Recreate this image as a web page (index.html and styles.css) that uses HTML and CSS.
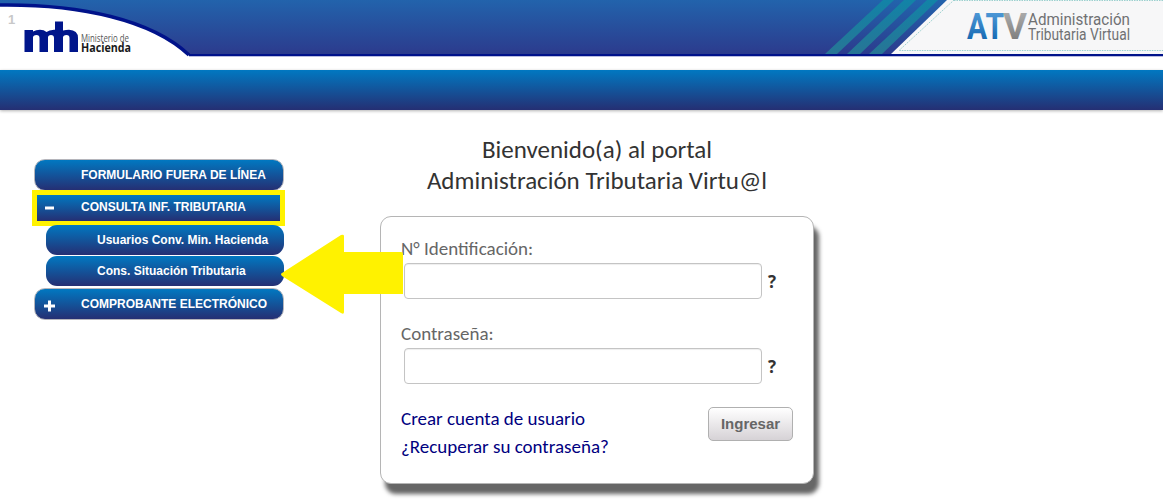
FILE: index.html
```html
<!DOCTYPE html>
<html lang="es">
<head>
  <meta charset="UTF-8">
  <title>ATV - Administración Tributaria Virtual</title>
  <link rel="stylesheet" href="styles.css">
</head>
<body>
  <header class="header">
    <svg class="banner" viewBox="0 0 1163 57" width="1163" height="57">
      <defs>
        <linearGradient id="sky" x1="0" y1="0" x2="0" y2="1">
          <stop offset="0" stop-color="#2263ac"/>
          <stop offset="1" stop-color="#2c3b8d"/>
        </linearGradient>
        <linearGradient id="stripe" x1="0" y1="0" x2="0" y2="1">
          <stop offset="0" stop-color="#1283a7"/>
          <stop offset="1" stop-color="#277595"/>
        </linearGradient>
        <linearGradient id="blue" x1="0" y1="0" x2="0" y2="1">
          <stop offset="0.2" stop-color="#4a95d4"/>
          <stop offset="0.9" stop-color="#0d62ad"/>
        </linearGradient>
        <linearGradient id="gray" x1="0" y1="0" x2="0" y2="1">
          <stop offset="0.2" stop-color="#a8a8a8"/>
          <stop offset="0.9" stop-color="#777"/>
        </linearGradient>
      </defs>
      <rect width="1163" height="54" fill="url(#sky)"/>
      <g fill="url(#stripe)">
        <path d="M883 0h11L837 54h-12z"/>
        <path d="M904 0h12L860 54h-13z"/>
        <path d="M927 0h11L882 54h-13z"/>
      </g>
      <path d="M947 0H1163V54H891z" fill="#f7f7f8"/>
      <path d="M954 0L899 50.500H1163M954 .5H1163" fill="none" stroke="#9bd0cf" stroke-dasharray="1.500 1"/>
      <rect y="54" width="1163" height="2" fill="#00128a"/>
      <rect y="56" width="1163" height="1" fill="#b9bce0"/>
      <path d="M0 5C80 4 152 20 189 55V57H0z" fill="#fff"/>
      <path d="M0 5C80 4 152 20 189 55" fill="none" stroke="#00128a" stroke-width="3.500"/>

      <text class="page-num" x="8" y="24">1</text>
      <!-- logo Hacienda -->
      <path d="M24.500 30H33V31.500Q36 29.700 40 29.700Q44 29.700 46.500 32Q49 30 54 29.700H55V21.500H63V30.500Q66 29.700 69 29.700Q78 30 78 38V52H69.500V38Q69.500 35 66.500 35Q63 35 63 37.500V52H54V38Q54 35 51 35Q48 35 48 37.500V52H39.500V38Q39.500 35 36.500 35Q33 35 33 37.500V52H24.500z" fill="#00158b"/>
      <text class="min-top" x="81" y="42" textLength="48" lengthAdjust="spacingAndGlyphs">Ministerio de</text>
      <text class="min-bottom" x="81" y="51.500" textLength="50" lengthAdjust="spacingAndGlyphs">Hacienda</text>
      <!-- logo ATV -->
      <text class="atv" x="967" y="39" textLength="37" lengthAdjust="spacingAndGlyphs" fill="url(#blue)">AT</text>
      <text class="atv" x="1003" y="39" textLength="24" lengthAdjust="spacingAndGlyphs" fill="url(#gray)">V</text>
      <text class="atv-name" x="1028" y="25" textLength="102" lengthAdjust="spacingAndGlyphs">Administración</text>
      <text class="atv-name" x="1028" y="40" textLength="102" lengthAdjust="spacingAndGlyphs">Tributaria Virtual</text>
    </svg>
  </header>
  <div class="navbar"></div>

  <main class="content">
    <nav class="menu">
      <a class="item">FORMULARIO FUERA DE LÍNEA</a>
      <a class="item selected"><svg class="sign" width="12" height="12"><path d="M1 6h9" /></svg>CONSULTA INF. TRIBUTARIA</a>
      <a class="item sub">Usuarios Conv. Min. Hacienda</a>
      <a class="item sub sub-last">Cons. Situación Tributaria</a>
      <a class="item last"><svg class="sign" width="12" height="12"><path d="M0 6h11M5.500 .5v11" /></svg>COMPROBANTE ELECTRÓNICO</a>
    </nav>

    <section class="login">
      <h1>Bienvenido(a) al portal<br>Administración Tributaria Virtu@l</h1>
      <form class="card">
        <label for="user">N° Identificación:</label>
        <div class="field"><input type="text" id="user"><b>?</b></div>
        <label for="pass">Contraseña:</label>
        <div class="field"><input type="password" id="pass"><b>?</b></div>
        <div class="bottom">
          <div class="links">
            <a>Crear cuenta de usuario</a>
            <a>¿Recuperar su contraseña?</a>
          </div>
          <button type="button">Ingresar</button>
        </div>
      </form>
    </section>
  </main>

  <svg class="arrow" width="124" height="82" viewBox="0 0 124 82">
    <path d="M1 39L60 1Q63 0 63 2V18H120Q122 18 122 20V60H63V78Q63 81 60 79L1 42Q-1 40 1 39z" fill="#fff200"/>
  </svg>
</body>
</html>
```
FILE: styles.css
```css
* {
  box-sizing: border-box;
}
body {
  margin: 0;
  min-height: 502px;
  background: #fff;
  font-family: "Liberation Sans", Arial, sans-serif;
}
.header {
  height: 70px;
}
.banner {
  display: block;
}
.page-num {
  font-size: 13px;
  font-weight: bold;
  fill: #c8c8c8;
}
.min-top {
  font: 10px "Open Sans", sans-serif;
  fill: #555;
}
.min-bottom {
  font: bold 11.500px "Open Sans", sans-serif;
  fill: #1a1a1a;
}
.atv {
  font: bold 36px Roboto, sans-serif;
}
.atv-name {
  font: 16.500px Roboto, sans-serif;
  fill: #707173;
}
.navbar {
  height: 40px;
  background: linear-gradient(#0178c1, #252f73);
  box-shadow: 0 1px 3px rgba(0,0,0,0.3);
}
.content {
  display: flex;
}
.menu {
  width: 250px;
  margin: 49px 0 0 34px;
  display: flex;
  flex-direction: column;
  align-items: flex-end;
}
.item {
  display: flex;
  align-items: center;
  width: 250px;
  height: 32px;
  padding-left: 46px;
  border: 1px solid #b5b5bb;
  border-radius: 11px;
  background: linear-gradient(#0178c1, #252f73);
  color: #fff;
  font-size: 12px;
  font-weight: bold;
  white-space: nowrap;
}
.item.selected {
  width: 253px;
  height: 36px;
  margin: -1px -1px 0 0;
  padding: 0 0 3px 44px;
  border: 5px solid #fff200;
  border-radius: 0;
}
.item.sub {
  width: 238px;
  height: 30px;
  margin-top: -1px;
  padding-left: 51px;
  border: 0;
}
.item.sub.sub-last {
  margin-top: 1px;
}
.item.last {
  margin-top: 2px;
}
.sign {
  width: 12px;
  margin: 3px 25px 0 -37px;
  stroke: #fff;
  stroke-width: 3;
}
.login {
  width: 434px;
  margin-left: 96px;
}
h1 {
  margin: 24px 0 20px;
  color: #333;
  font: 25px/31px Carlito, Lato, sans-serif;
  text-align: center;
}
.card {
  height: 268px;
  padding: 18px 20px 0;
  border: 1px solid #b5b5b5;
  border-radius: 11px;
  background: #fff;
  box-shadow: 5px 10px 4px #666;
}
label {
  display: block;
  height: 28px;
  color: #666;
  font: 19px/28px Carlito, Lato, sans-serif;
}
.field {
  display: flex;
  align-items: center;
  height: 36px;
  margin-bottom: 21px;
  padding-left: 3px;
}
input {
  width: 358px;
  height: 36px;
  border: 1px solid #c4c4c4;
  border-radius: 4px;
  box-shadow: inset 0 1px 1px rgba(0,0,0,0.07);
}
.field b {
  margin-left: 6px;
  color: #333;
  font: bold 17px "Open Sans", sans-serif;
}
.bottom {
  display: flex;
  justify-content: space-between;
}
.links {
  display: flex;
  flex-direction: column;
  color: #000080;
  font: 19px/28px Carlito, Lato, sans-serif;
}
button {
  width: 85px;
  height: 34px;
  margin-top: 2px;
  padding: 0 0 1px;
  border: 1px solid #b0b0b0;
  border-radius: 5px;
  background: linear-gradient(#fff, #d6d2d6);
  color: #666;
  font: bold 15px "Liberation Sans", Arial, sans-serif;
}
/* flecha sobre el menu y el formulario */
.arrow {
  position: absolute;
  left: 281px;
  top: 234px;
}
```
